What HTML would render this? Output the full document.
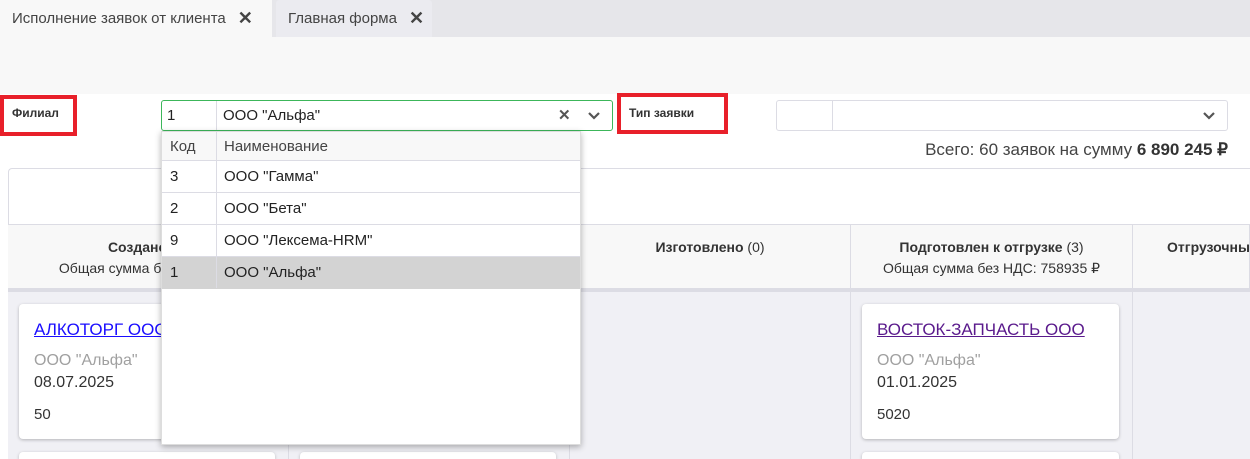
<!DOCTYPE html>
<html style="width:1250px;height:459px;overflow:hidden"><head><meta charset="utf-8"><style>
*{box-sizing:border-box;margin:0;padding:0}
body{width:1250px;height:459px;overflow:hidden;background:#fff;font-family:"Liberation Sans","Noto Sans CJK SC",sans-serif;color:#333;position:relative;font-size:14px}
.abs{position:absolute}
.tabs{left:0;top:0;width:1250px;height:37px;background:#e6e6ea}
.tab{top:0;height:37px;display:flex;align-items:center;font-size:15px;color:#444;padding-left:12px}
.x{font-weight:bold;font-size:18px;color:#444;margin-left:12px}
.hdr{left:0;top:37px;width:1250px;height:57px;background:#f8f8f8}
.red{border:4px solid #e8202a;background:#fff;font-size:12px;color:#333;padding:7px 8px;font-weight:bold}
.col{top:225px;height:63px;background:#f8f8f8;border-right:1px solid #dcdce4;text-align:center;font-size:14px;color:#333;padding-top:12px;line-height:21px}
.body{top:292px;height:167px;background:#f0f0f5;border-right:1px solid #dcdce4}
.card{background:#fff;border-radius:4px;box-shadow:0 1px 3px rgba(0,0,0,.25);padding:16px 15px}
.card a{font-size:17px;text-decoration:underline;display:block;margin-bottom:12px}
.g{color:#a0a0a0;font-size:16px}
.d{font-size:16px;color:#333;margin-top:4px}
.n{font-size:15px;color:#333;margin-top:14px}
.dd{left:161px;top:131px;width:420px;height:314px;background:#fff;box-shadow:0 2px 6px rgba(0,0,0,.3);border:1px solid #ddd}
.row{position:absolute;left:0;width:418px;height:32px;border-bottom:1px solid #dcdce4;font-size:15px;color:#222;line-height:32px}
.row span{position:absolute;left:8px}
.row b{position:absolute;left:62px;font-weight:normal}
</style></head><body>
<div class="abs tabs"></div>
<div class="abs tab" style="left:0;width:272px;background:#f8f8f8">Исполнение заявок от клиента<span class="x">✕</span></div>
<div class="abs tab" style="left:276px;width:156px;background:#ebebf0;border-radius:3px 3px 0 0">Главная форма<span class="x">✕</span></div>
<div class="abs hdr"></div>

<div class="abs red" style="left:0;top:95px;width:77px;height:41px">Филиал</div>
<div class="abs" style="left:161px;top:100px;width:452px;height:31px;border:1px solid #3cb65a;border-radius:3px;background:#fff;font-size:15px;color:#222">
 <span class="abs" style="left:5px;top:6px">1</span>
 <div class="abs" style="left:54px;top:0;width:1px;height:29px;background:#dcdce4"></div>
 <span class="abs" style="left:61px;top:6px">ООО "Альфа"</span>
 <span class="abs" style="left:396px;top:5px;font-weight:bold;color:#555">✕</span>
 <svg class="abs" style="left:425px;top:9px" width="14" height="12"><path d="M2 3l5 5 5-5" stroke="#555" stroke-width="2.2" fill="none"/></svg>
</div>
<div class="abs red" style="left:617px;top:93px;width:111px;height:41px;padding-top:9px">Тип заявки</div>
<div class="abs" style="left:776px;top:100px;width:452px;height:31px;border:1px solid #dcdce4;border-radius:3px;background:#fff">
 <div class="abs" style="left:55px;top:0;width:1px;height:29px;background:#dcdce4"></div>
 <svg class="abs" style="left:425px;top:9px" width="14" height="12"><path d="M2 3l5 5 5-5" stroke="#555" stroke-width="2.2" fill="none"/></svg>
</div>
<div class="abs" style="right:22px;top:140px;font-size:17px;color:#444">Всего: 60 заявок на сумму <b style="color:#333">6 890 245 ₽</b></div>

<div class="abs" style="left:8px;top:168px;width:1242px;height:291px;border:1px solid #dcdce4;border-bottom:none;border-right:none;border-radius:4px 0 0 0"></div>
<div class="abs" style="left:8px;top:224px;width:1242px;height:1px;background:#dcdce4"></div>
<div class="abs col" style="left:8px;width:281px"><b>Создано</b> (2)<br>Общая сумма без НДС: 0 ₽</div>
<div class="abs col" style="left:289px;width:281px"><b>В работе</b></div>
<div class="abs col" style="left:570px;width:281px"><b>Изготовлено</b> (0)</div>
<div class="abs col" style="left:851px;width:282px"><b>Подготовлен к отгрузке</b> (3)<br>Общая сумма без НДС: 758935 ₽</div>
<div class="abs col" style="left:1133px;width:117px;text-align:left;padding-left:34px;white-space:nowrap;overflow:hidden"><b>Отгрузочные</b></div>
<div class="abs" style="left:8px;top:288px;width:1242px;height:4px;background:#dcdce4"></div>
<div class="abs body" style="left:8px;width:281px"></div>
<div class="abs body" style="left:289px;width:281px"></div>
<div class="abs body" style="left:570px;width:281px"></div>
<div class="abs body" style="left:851px;width:282px"></div>
<div class="abs body" style="left:1133px;width:117px;border-right:none"></div>

<div class="abs card" style="left:19px;top:304px;width:256px;height:135px"><a style="color:#1a0dff">АЛКОТОРГ ООО</a><div class="g">ООО "Альфа"</div><div class="d">08.07.2025</div><div class="n">50</div></div>
<div class="abs card" style="left:19px;top:452px;width:256px;height:7px;padding:0;border-radius:4px 4px 0 0"></div>
<div class="abs card" style="left:300px;top:452px;width:256px;height:7px;padding:0;border-radius:4px 4px 0 0"></div>
<div class="abs card" style="left:862px;top:304px;width:257px;height:135px"><a style="color:#5a1a8c">ВОСТОК-ЗАПЧАСТЬ ООО</a><div class="g">ООО "Альфа"</div><div class="d">01.01.2025</div><div class="n">5020</div></div>
<div class="abs card" style="left:862px;top:452px;width:257px;height:7px;padding:0;border-radius:4px 4px 0 0"></div>

<div class="abs dd">
 <div class="row" style="top:0;height:29px;line-height:29px;background:#f8f8f8;color:#444"><span>Код</span><b>Наименование</b></div>
 <div class="row" style="top:29px"><span>3</span><b>ООО "Гамма"</b></div>
 <div class="row" style="top:61px"><span>2</span><b>ООО "Бета"</b></div>
 <div class="row" style="top:93px"><span>9</span><b>ООО "Лексема-HRM"</b></div>
 <div class="row" style="top:125px;background:#d3d3d3;border-bottom:none"><span>1</span><b>ООО "Альфа"</b></div>
 <div class="abs" style="left:54px;top:0;width:1px;height:156px;background:#dcdce4"></div>
</div>
</body></html>
